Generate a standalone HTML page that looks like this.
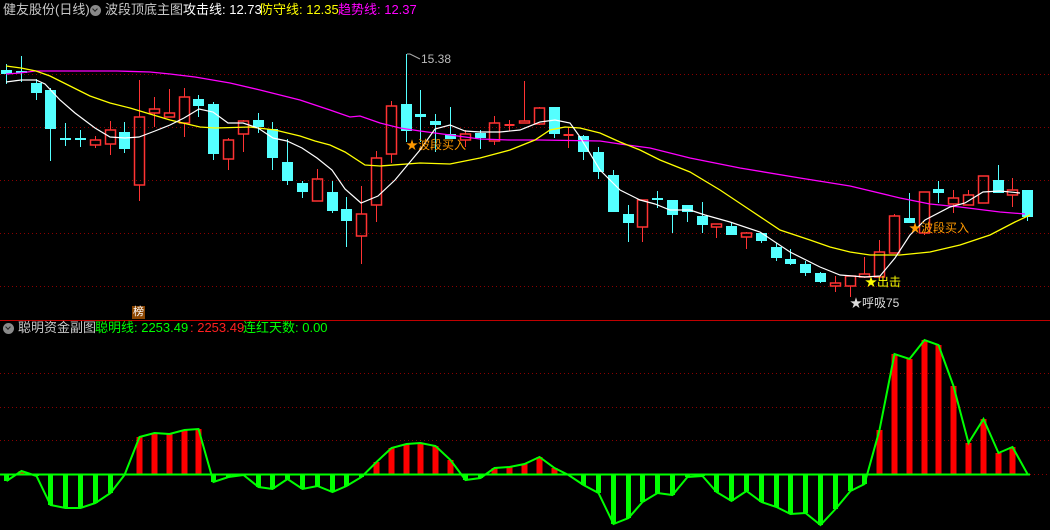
<!DOCTYPE html>
<html><head><meta charset="utf-8">
<style>
html,body{margin:0;padding:0;background:#000;width:1050px;height:530px;overflow:hidden}
body{position:relative;font-family:"Liberation Sans","Noto Sans CJK SC",sans-serif}
.t{position:absolute;font-size:13px;white-space:nowrap;line-height:14px}
.ic{position:absolute;width:11px;height:11px;border-radius:50%;background:#8a8a8a}
.ic:after{content:"";position:absolute;left:3px;top:2px;width:3px;height:3px;border-right:1.5px solid #222;border-bottom:1.5px solid #222;transform:rotate(45deg)}
svg{position:absolute;left:0;top:0}
</style></head><body>
<svg id="s" width="1050" height="530" xmlns="http://www.w3.org/2000/svg">
<g stroke="#8b0000" stroke-dasharray="1,3" stroke-width="1">
<line x1="0" y1="74.5" x2="1050" y2="74.5"/><line x1="0" y1="127.5" x2="1050" y2="127.5"/>
<line x1="0" y1="180.5" x2="1050" y2="180.5"/><line x1="0" y1="233.5" x2="1050" y2="233.5"/>
<line x1="0" y1="286.5" x2="1050" y2="286.5"/>
<line x1="0" y1="373.5" x2="1050" y2="373.5"/><line x1="0" y1="407.5" x2="1050" y2="407.5"/>
<line x1="0" y1="440.5" x2="1050" y2="440.5"/><line x1="1030" y1="474.5" x2="1050" y2="474.5"/>
</g>
<line x1="0" y1="320.5" x2="1050" y2="320.5" stroke="#c00000" stroke-width="1"/>
<g id="cd"></g><g id="ind"></g>
<polyline fill="none" stroke="#ff00ff" stroke-width="1.3" points="6,74 20,73 35,71 117,71 150,72 170,74 195,77 230,83 260,90 280,95 300,100 330,110 350,117 360,116 380,123 400,128 420,131 450,135 480,139 510,140 540,140 600,141 620,144 650,148 690,158 740,168 800,178 850,186 900,198 930,204 960,207 1000,212 1025,214"/>
<polyline fill="none" stroke="#ffff00" stroke-width="1.3" points="6,66 21,68 36,71 50,76 70,86 90,96 110,103 130,108 150,114 170,120 200,127 215,128 250,127 275,130 300,136 315,141 330,145 345,152 365,165 380,166 420,163 450,164 480,158 510,150 535,140 550,130 565,127 580,128 600,133 620,142 640,150 660,160 690,172 720,190 750,210 780,230 810,240 830,247 850,252 870,255 900,255 930,252 960,245 990,235 1015,222 1030,215"/>
<polyline fill="none" stroke="#ffffff" stroke-width="1.2" points="6,82 21,80 36,80 45,84 60,100 75,113 95,128 110,137 125,138 139,137 155,131 170,125 184,118 199,109 213,112 228,123 243,123 258,128 273,138 287,141 302,148 317,158 332,170 345,189 361,203 378,196 395,180 410,162 420,150 435,129 450,125 465,131 480,132 500,132 520,130 540,122 555,120 570,123 580,137 600,170 620,190 640,200 655,204 670,210 690,210 705,215 730,222 760,232 790,252 820,267 840,275 865,277 880,276 895,258 910,235 925,220 950,207 965,203 983,192 1000,191 1020,193"/>
<polyline fill="none" stroke="#aaa" stroke-width="1" points="407,54 410,54 420,59"/>
</svg>
<div class="t" style="left:3px;top:3px;color:#c8c8c8">健友股份(日线)</div>
<div class="ic" style="left:90px;top:5px"></div>
<div class="t" style="left:105px;top:3px;color:#c8c8c8">波段顶底主图</div>
<div class="t" style="left:183px;top:3px;color:#fff">攻击线: 12.73</div>
<div class="t" style="left:260px;top:3px;color:#ffff00">防守线: 12.35</div>
<div class="t" style="left:338px;top:3px;color:#ff00ff">趋势线: 12.37</div>
<div class="t" style="left:421px;top:52px;color:#bbb;font-size:12px">15.38</div>
<div class="t" style="left:406px;top:138px;color:#ff9900;font-size:12px">★波段买入</div>
<div class="t" style="left:909px;top:221px;color:#ff9900;font-size:12px">★波段买入</div>
<div class="t" style="left:865px;top:275px;color:#ffff00;font-size:12px">★出击</div>
<div class="t" style="left:850px;top:296px;color:#ddd;font-size:12px">★呼吸75</div>
<div class="t" style="left:132px;top:306px;width:13px;height:13px;background:#8b4500;color:#fff;font-size:11px;line-height:13px;text-align:center">榜</div>
<div class="ic" style="left:3px;top:323px"></div>
<div class="t" style="left:18px;top:321px;color:#c8c8c8">聪明资金副图</div>
<div class="t" style="left:95px;top:321px;color:#00ff00">聪明线: 2253.49</div>
<div class="t" style="left:190px;top:321px;color:#ff2020">: 2253.49</div>
<div class="t" style="left:243px;top:321px;color:#00ff00">连红天数: 0.00</div>
<script>
var C=[[64,70,74,84,0],[56,71,73,82,0],[79,83,93,100,0],[88,90,129,161,0],[123,138,138,146,0],[130,138,138,147,0],[136,140,145,148,1],[121,130,144,155,1],[122,132,149,153,0],[80,117,185,201,1],[97,109,113,127,1],[89,113,117,117,1],[88,97,123,137,1],[95,99,106,117,0],[102,104,154,160,0],[138,140,159,170,1],[120,121,134,152,1],[113,120,127,133,0],[122,129,158,170,0],[139,162,181,185,0],[181,183,192,198,0],[169,179,201,201,1],[181,192,211,213,0],[197,209,221,247,0],[186,214,236,264,1],[151,158,205,222,1],[101,106,154,163,1],[54,104,131,142,0],[90,114,117,142,0],[114,121,125,152,0],[107,134,139,139,0],[130,134,140,147,1],[130,133,138,149,0],[116,123,141,145,1],[120,125,125,131,1],[81,121,123,123,1],[107,108,124,125,1],[107,107,134,138,0],[127,135,135,148,1],[135,136,152,160,0],[147,152,172,179,0],[170,175,212,212,0],[205,214,223,242,0],[200,200,227,242,1],[191,198,198,208,0],[200,200,215,233,0],[205,205,212,222,0],[202,216,225,233,0],[224,224,227,238,1],[222,226,235,235,0],[232,233,237,249,1],[233,233,241,243,0],[243,247,258,261,0],[249,259,264,265,0],[261,264,273,276,0],[272,273,282,283,0],[276,283,286,292,1],[276,276,286,297,1],[257,274,277,278,1],[240,252,277,277,1],[214,216,253,253,1],[193,218,223,223,0],[192,192,233,235,1],[181,189,193,203,0],[190,198,204,213,1],[190,195,205,205,1],[176,176,203,203,1],[165,180,193,193,0],[178,190,195,207,1],[190,190,217,221,0]];
var V=[481,471,476,505,508,508,503,493,475,437,433,434,430,429,482,477,475,487,489,479,489,486,492,486,477,462,448,444,443,446,460,480,478,468,467,464,457,468,475,485,493,524,518,502,493,495,477,476,492,501,491,502,507,514,513,525,509,491,484,430,354,359,340,345,386,443,419,453,447,474];
var h='',g='',pts=[];
for(var i=0;i<C.length;i++){var x=Math.round(6+14.8*i)+.5,c=C[i];
if(c[4]){h+='<line x1="'+x+'" y1="'+c[0]+'" x2="'+x+'" y2="'+c[1]+'" stroke="#ff3333"/><line x1="'+x+'" y1="'+c[2]+'" x2="'+x+'" y2="'+c[3]+'" stroke="#ff3333"/>';
if(c[2]-c[1]<1)h+='<line x1="'+(x-5)+'" y1="'+c[1]+'" x2="'+(x+5)+'" y2="'+c[1]+'" stroke="#ff3333" stroke-width="2"/>';
else h+='<rect x="'+(x-5)+'" y="'+c[1]+'" width="10" height="'+(c[2]-c[1])+'" fill="none" stroke="#ff3333" stroke-width="1.5"/>';}
else{h+='<line x1="'+x+'" y1="'+c[0]+'" x2="'+x+'" y2="'+c[3]+'" stroke="#54ffff"/>';
h+='<rect x="'+(x-5.5)+'" y="'+c[1]+'" width="11" height="'+Math.max(2,c[2]-c[1])+'" fill="#54ffff"/>';}
var v=V[i];pts.push(x+','+v);
if(v<474)g+='<rect x="'+(x-3)+'" y="'+v+'" width="6" height="'+(474-v)+'" fill="#ff0000"/>';
else if(v>474)g+='<rect x="'+(x-2.5)+'" y="474" width="5" height="'+(v-474)+'" fill="#00ff00"/>';}
g+='<line x1="0" y1="474.5" x2="1030" y2="474.5" stroke="#00ff00" stroke-width="2"/>';
g+='<polyline fill="none" stroke="#00ff00" stroke-width="2" points="'+pts.join(' ')+'"/>';
document.getElementById('cd').innerHTML=h;document.getElementById('ind').innerHTML=g;
</script>
</body></html>
